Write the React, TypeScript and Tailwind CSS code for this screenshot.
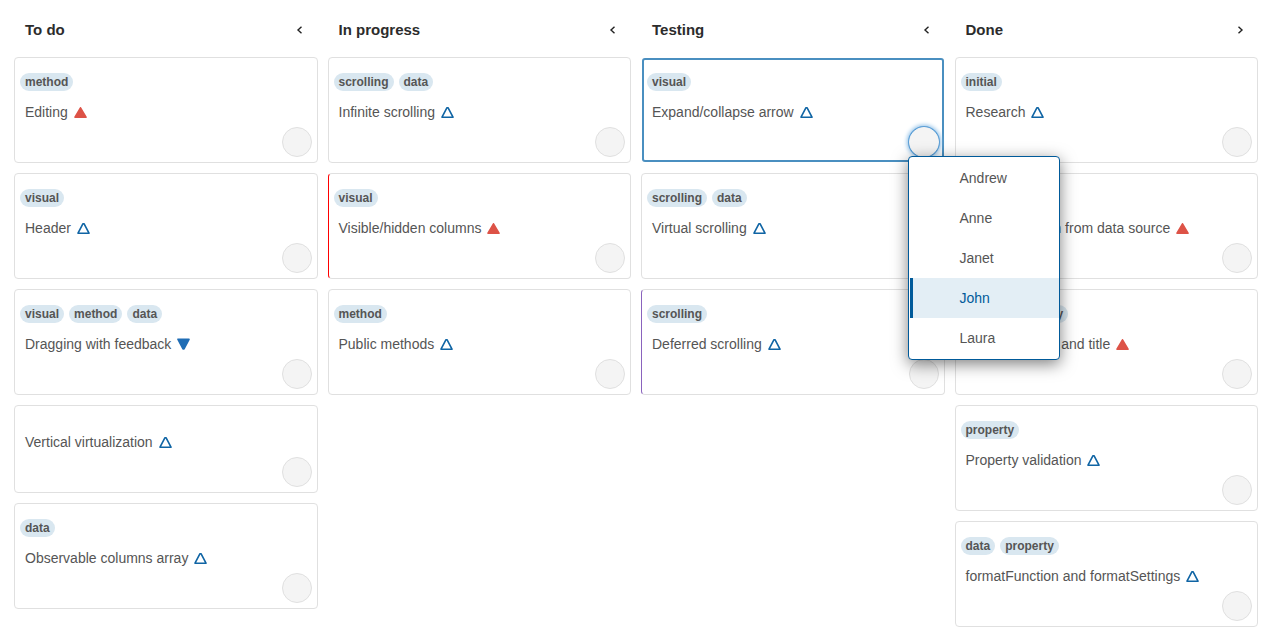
import React, { useState } from 'react';
import clsx from 'clsx';

type Priority = 'low' | 'normal' | 'high';

interface Task {
  id: number;
  text: string;
  tags: string[];
  priority: Priority;
  accent?: string;
}

interface Column {
  id: string;
  label: string;
  collapse: 'left' | 'right';
  tasks: Task[];
}

const users = ['Andrew', 'Anne', 'Janet', 'John', 'Laura'];

const columns: Column[] = [
  {
    id: 'toDo',
    label: 'To do',
    collapse: 'left',
    tasks: [
      { id: 1, text: 'Editing', tags: ['method'], priority: 'high' },
      { id: 2, text: 'Header', tags: ['visual'], priority: 'normal' },
      { id: 3, text: 'Dragging with feedback', tags: ['visual', 'method', 'data'], priority: 'low' },
      { id: 4, text: 'Vertical virtualization', tags: [], priority: 'normal' },
      { id: 5, text: 'Observable columns array', tags: ['data'], priority: 'normal' },
    ],
  },
  {
    id: 'inProgress',
    label: 'In progress',
    collapse: 'left',
    tasks: [
      { id: 6, text: 'Infinite scrolling', tags: ['scrolling', 'data'], priority: 'normal' },
      { id: 7, text: 'Visible/hidden columns', tags: ['visual'], priority: 'high', accent: 'border-l-[#ff0000]' },
      { id: 8, text: 'Public methods', tags: ['method'], priority: 'normal' },
    ],
  },
  {
    id: 'testing',
    label: 'Testing',
    collapse: 'left',
    tasks: [
      { id: 9, text: 'Expand/collapse arrow', tags: ['visual'], priority: 'normal' },
      { id: 10, text: 'Virtual scrolling', tags: ['scrolling', 'data'], priority: 'normal' },
      { id: 11, text: 'Deferred scrolling', tags: ['scrolling'], priority: 'normal', accent: 'border-l-[#8a63bd]' },
    ],
  },
  {
    id: 'done',
    label: 'Done',
    collapse: 'right',
    tasks: [
      { id: 12, text: 'Research', tags: ['initial'], priority: 'normal' },
      { id: 13, text: 'Item population from data source', tags: ['data'], priority: 'high' },
      { id: 14, text: 'Showing cover and title', tags: ['visual', 'property'], priority: 'high' },
      { id: 15, text: 'Property validation', tags: ['property'], priority: 'normal' },
      { id: 16, text: 'formatFunction and formatSettings', tags: ['data', 'property'], priority: 'normal' },
    ],
  },
];

const PriorityIcon: React.FC<{ priority: Priority }> = ({ priority }) => (
  <svg className="h-3 w-[13px] shrink-0" viewBox="0 0 13 12" role="img" aria-label={`${priority} priority`}>
    {priority === 'high' && (
      <path d="M6.5 1.8L12 11.2H1z" fill="#dd5347" stroke="#dd5347" strokeWidth="1.6" strokeLinejoin="round" />
    )}
    {priority === 'normal' && (
      <path d="M6 1.7h1L12 11.2H1z" fill="none" stroke="#0f64a4" strokeWidth="1.6" strokeLinejoin="round" />
    )}
    {priority === 'low' && (
      <path d="M1 1.3h11L7 11H6z" fill="#1f6db5" stroke="#1f6db5" strokeWidth="1.6" strokeLinejoin="round" />
    )}
  </svg>
);

const Chevron: React.FC<{ direction: 'left' | 'right' }> = ({ direction }) => (
  <svg className="h-2 w-2" viewBox="0 0 8 8" fill="none" stroke="#222" strokeWidth="1.4">
    <path d={direction === 'left' ? 'M5.5 .8L2 4L5.5 7.2' : 'M2.5 .8L6 4L2.5 7.2'} />
  </svg>
);

const UserMenu: React.FC<{ selected: string; onSelect: (user: string) => void }> = ({ selected, onSelect }) => (
  <ul className="absolute top-[29px] -left-px z-10 w-[152px] rounded border border-[#005a9a] bg-white py-px pl-px shadow-[0_4px_16px_rgba(0,0,0,0.5)]">
    {users.map(user => (
      <li key={user}>
        <button
          type="button"
          onClick={() => onSelect(user)}
          className={clsx(
            'block h-10 w-full border-l-3 pl-[47px] text-left',
            user === selected ? 'border-[#005a9a] bg-[#e3eef5] text-[#005a9a]' : 'border-transparent'
          )}
        >
          {user}
        </button>
      </li>
    ))}
  </ul>
);

const TaskCard: React.FC<{
  task: Task;
  isOpen: boolean;
  assignee: string;
  onToggle: () => void;
  onAssign: (user: string) => void;
}> = ({ task, isOpen, assignee, onToggle, onAssign }) => (
  <article
    className={clsx(
      'rounded border bg-white px-[5px] pt-[15px] pb-[5px]',
      isOpen ? 'border-transparent inset-ring-2 inset-ring-[#4a8fc0]' : 'border-[#e0e0e0]',
      task.accent
    )}
  >
    {task.tags.length > 0 && (
      <div className="flex gap-[5px]">
        {task.tags.map(tag => (
          <span key={tag} className="h-[18px] rounded-full bg-[#d9e7f0] px-[5px] text-xs leading-[18px] font-bold">
            {tag}
          </span>
        ))}
      </div>
    )}
    <div className="mt-[11px] flex items-center gap-1.5 pl-[5px] leading-5">
      <h3>{task.text}</h3>
      <PriorityIcon priority={task.priority} />
    </div>
    <div className="mt-[5px] flex justify-end">
      <div className="relative h-[30px] w-[30px]">
        <button
          type="button"
          aria-label={`Assign ${task.text}`}
          onClick={onToggle}
          className={clsx(
            'block h-full w-full rounded-full border bg-[#f4f4f4]',
            isOpen ? 'border-[#f4f4f4] shadow-[0_0_0_1px_#5c9fd6,0_0_4px_2px_#8fc0e8]' : 'border-[#e0e0e0]'
          )}
        />
        {isOpen && <UserMenu selected={assignee} onSelect={onAssign} />}
      </div>
    </div>
  </article>
);

const App: React.FC = () => {
  const [openTask, setOpenTask] = useState<number | null>(9);
  const [assignees, setAssignees] = useState<Record<number, string>>({ 9: 'John' });

  const handleAssign = (id: number, user: string) => {
    setAssignees({ ...assignees, [id]: user });
    setOpenTask(null);
  };

  return (
    <main className="grid min-h-screen grid-cols-4 gap-[10px] bg-white pr-4 pb-4 pl-[14px] font-['Liberation_Sans',Arial,sans-serif] text-sm text-[#555]">
      {columns.map(column => (
        <section key={column.id}>
          <header className="flex h-[57px] items-center justify-between pt-[3px] pr-[14px] pl-[11px]">
            <h2 className="text-[15px] font-bold text-[#2c2c2c]">{column.label}</h2>
            <button type="button" aria-label={`Toggle ${column.label}`}>
              <Chevron direction={column.collapse} />
            </button>
          </header>
          <div className="flex flex-col gap-[10px]">
            {column.tasks.map(task => (
              <TaskCard
                key={task.id}
                task={task}
                isOpen={openTask === task.id}
                assignee={assignees[task.id]}
                onToggle={() => setOpenTask(openTask === task.id ? null : task.id)}
                onAssign={user => handleAssign(task.id, user)}
              />
            ))}
          </div>
        </section>
      ))}
    </main>
  );
};

export default App;
